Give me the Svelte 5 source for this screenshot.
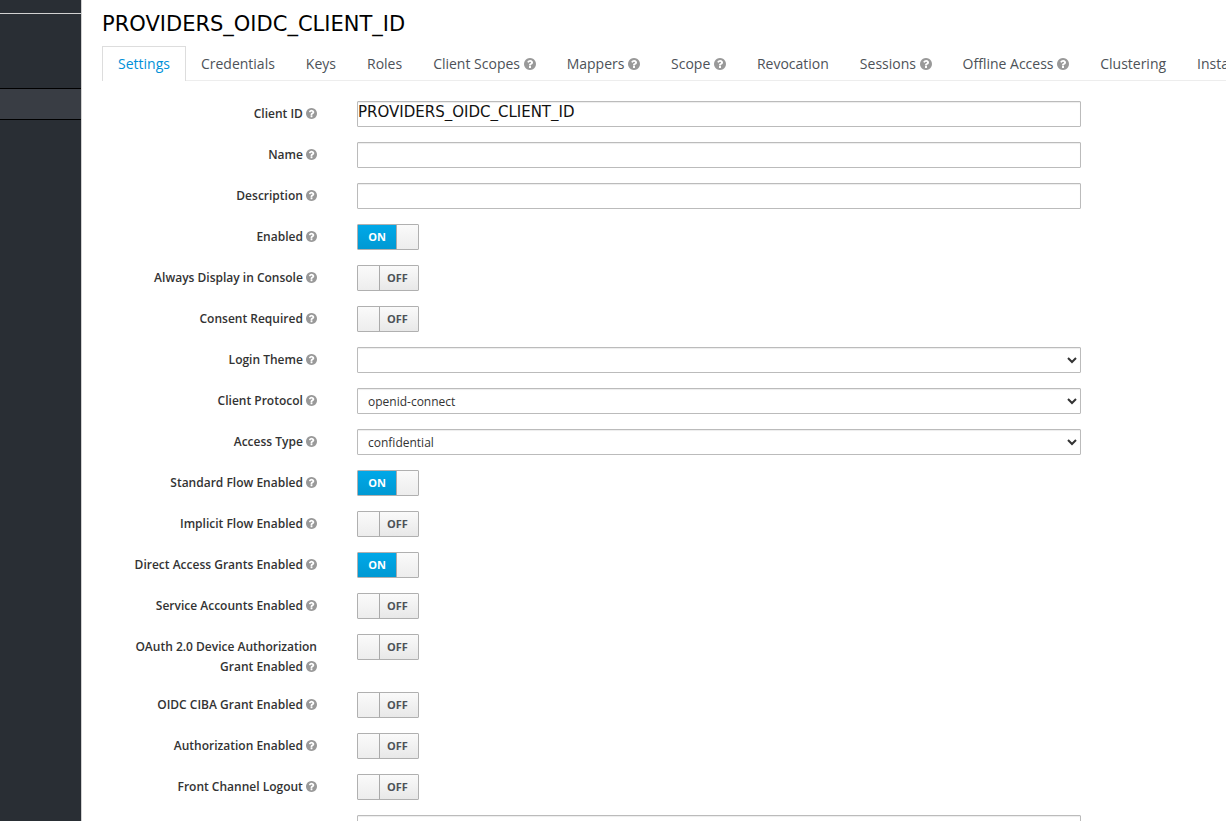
<script>
  const tabs = [
    { label: 'Settings', active: true },
    { label: 'Credentials' },
    { label: 'Keys' },
    { label: 'Roles' },
    { label: 'Client Scopes', help: true },
    { label: 'Mappers', help: true },
    { label: 'Scope', help: true },
    { label: 'Revocation' },
    { label: 'Sessions', help: true },
    { label: 'Offline Access', help: true },
    { label: 'Clustering' },
    { label: 'Installation' }
  ];

  let fields = $state([
    { id: 'clientId', label: 'Client ID', type: 'text', value: 'PROVIDERS_OIDC_CLIENT_ID' },
    { id: 'name', label: 'Name', type: 'text', value: '' },
    { id: 'description', label: 'Description', type: 'text', value: '' },
    { id: 'enabled', label: 'Enabled', type: 'switch', value: true },
    { id: 'alwaysDisplay', label: 'Always Display in Console', type: 'switch', value: false },
    { id: 'consent', label: 'Consent Required', type: 'switch', value: false },
    { id: 'loginTheme', label: 'Login Theme', type: 'select', value: '', options: [''] },
    { id: 'protocol', label: 'Client Protocol', type: 'select', value: 'openid-connect', options: ['openid-connect', 'saml'] },
    { id: 'accessType', label: 'Access Type', type: 'select', value: 'confidential', options: ['confidential', 'public', 'bearer-only'] },
    { id: 'standardFlow', label: 'Standard Flow Enabled', type: 'switch', value: true },
    { id: 'implicitFlow', label: 'Implicit Flow Enabled', type: 'switch', value: false },
    { id: 'directAccess', label: 'Direct Access Grants Enabled', type: 'switch', value: true },
    { id: 'serviceAccounts', label: 'Service Accounts Enabled', type: 'switch', value: false },
    { id: 'deviceGrant', label: 'OAuth 2.0 Device Authorization Grant Enabled', type: 'switch', value: false },
    { id: 'ciba', label: 'OIDC CIBA Grant Enabled', type: 'switch', value: false },
    { id: 'authorization', label: 'Authorization Enabled', type: 'switch', value: false },
    { id: 'frontLogout', label: 'Front Channel Logout', type: 'switch', value: false }
  ]);
  let logoutUrl = $state('');
</script>

{#snippet helpIcon()}
  <svg class="help" viewBox="128 128 1536 1536" aria-hidden="true">
    <path d="M1024 1376v-192q0-14-9-23t-23-9h-192q-14 0-23 9t-9 23v192q0 14 9 23t23 9h192q14 0 23-9t9-23zm256-672q0-88-55.5-163t-138.5-116-170-41q-243 0-371 213-15 24 8 42l132 100q7 6 19 6 16 0 25-12 53-68 86-92 34-24 86-24 48 0 85.5 26t37.5 59q0 38-20 61t-68 45q-63 28-115.5 86.5t-52.5 125.5v36q0 14 9 23t23 9h192q14 0 23-9t9-23q0-19 21.5-49.5t54.5-49.5q32-18 49-28.5t46-35 44.5-48 28-60.5 12.5-81zm384 192q0 209-103 385.5t-279.5 279.5-385.5 103-385.5-103-279.5-279.5-103-385.5 103-385.5 279.5-279.5 385.5-103 385.5 103 279.5 279.5 103 385.5z" />
  </svg>
{/snippet}

<div class="shell">
  <aside class="sidebar">
    <div class="realm"></div>
    <div class="spacer"></div>
    <div class="current"></div>
  </aside>

  <main>
    <h1>PROVIDERS_OIDC_CLIENT_ID</h1>

    <nav>
      {#each tabs as tab}
        <a href="#{tab.label}" class:active={tab.active}>{tab.label}{#if tab.help}&nbsp;{@render helpIcon()}{/if}</a>
      {/each}
    </nav>

    <form>
      {#each fields as field (field.id)}
        <div class="row">
          <label class="name" for={field.id}>{field.label}&nbsp;{@render helpIcon()}</label>
          {#if field.type === 'text'}
            <input class="control text" id={field.id} type="text" bind:value={field.value} />
          {:else if field.type === 'select'}
            <select class="control" id={field.id} bind:value={field.value}>
              {#each field.options as option}
                <option value={option}>{option}</option>
              {/each}
            </select>
          {:else}
            <span class="switch" class:on={field.value}>
              <input id={field.id} type="checkbox" bind:checked={field.value} />
              {#if field.value}<span class="state">ON</span>{/if}
              <span class="handle"></span>
              {#if !field.value}<span class="state">OFF</span>{/if}
            </span>
          {/if}
        </div>
      {/each}
      <div class="row">
        <span></span>
        <input class="control text" type="text" aria-label="Front-Channel Logout URL" bind:value={logoutUrl} />
      </div>
    </form>
  </main>
</div>

<style>
  :global(body) {
    margin: 0;
    background: #fff;
  }

  .shell {
    display: flex;
    height: 100vh;
    overflow: hidden;
    font: 12px/20px 'Open Sans', sans-serif;
    color: #333;
  }

  .sidebar {
    flex: none;
    width: 81px;
    background: #292e34;
    border-right: 1px solid #d1d1d1;
  }

  .realm {
    height: 13px;
    border-bottom: 1px solid #d1d1d1;
  }

  .spacer {
    height: 74px;
  }

  .current {
    height: 30px;
    background: #393d44;
    border: solid #000;
    border-width: 1px 0;
  }

  main {
    flex: 1;
    min-width: 0;
    overflow: hidden;
    padding: 10px 0 0 20px;
  }

  h1 {
    margin: 0 0 8px;
    font: 400 21px/28px 'DejaVu Sans', sans-serif;
    color: #000;
  }

  nav {
    display: flex;
    height: 34px;
    border-bottom: 1px solid #ededed;
  }

  nav a {
    flex: none;
    box-sizing: border-box;
    height: 35px;
    margin-right: -1px;
    padding: 0 15px;
    border: 1px solid transparent;
    border-bottom: 0;
    font-size: 14px;
    line-height: 34px;
    color: #4d5258;
    white-space: nowrap;
    text-decoration: none;
  }

  nav a.active {
    background: #fff;
    border-color: #ddd;
    color: #0090d8;
  }

  .help {
    width: 11px;
    height: 11px;
    vertical-align: -1px;
    fill: #999;
  }

  nav .help {
    width: 12px;
    height: 12px;
  }

  form {
    display: grid;
    gap: 15px;
    padding: 20px 145px 0 0;
  }

  .row {
    display: grid;
    grid-template-columns: 215px minmax(0, 1fr);
    column-gap: 40px;
    align-items: start;
  }

  .name {
    padding: 3px 0 0 30px;
    font-weight: 600;
    text-align: right;
  }

  .control {
    box-sizing: border-box;
    width: 100%;
    height: 26px;
    margin: 0;
    border: 1px solid #bbb;
    border-radius: 1px;
    background: #fff;
    box-shadow: inset 0 1px 1px rgba(0, 0, 0, 0.075);
    font: 12px 'Open Sans', sans-serif;
    color: #333;
  }

  .text {
    padding: 0 0 4px;
    font: 15px 'DejaVu Sans', sans-serif;
    color: #111;
  }

  select.control {
    padding: 0 0 0 6px;
  }

  .switch {
    position: relative;
    display: flex;
    box-sizing: border-box;
    width: 62px;
    height: 26px;
    border: 1px solid #b0b0b0;
    border-radius: 1px;
    background: linear-gradient(#fafafa, #e8e8e8);
  }

  .switch input {
    position: absolute;
    inset: 0;
    width: 100%;
    height: 100%;
    margin: 0;
    opacity: 0;
    cursor: pointer;
  }

  .state {
    flex: 1;
    padding-right: 3px;
    font-size: 11px;
    font-weight: 700;
    line-height: 24px;
    text-align: center;
    color: #4d5258;
  }

  .handle {
    width: 21px;
    border-right: 1px solid #aaa;
    background: linear-gradient(#fafafa, #ededed);
  }

  .on .state {
    padding-right: 0;
    background: linear-gradient(#00a8e8, #0099d3);
    color: #fff;
  }

  .on .handle {
    border-right: 0;
    border-left: 1px solid #aaa;
  }
</style>
